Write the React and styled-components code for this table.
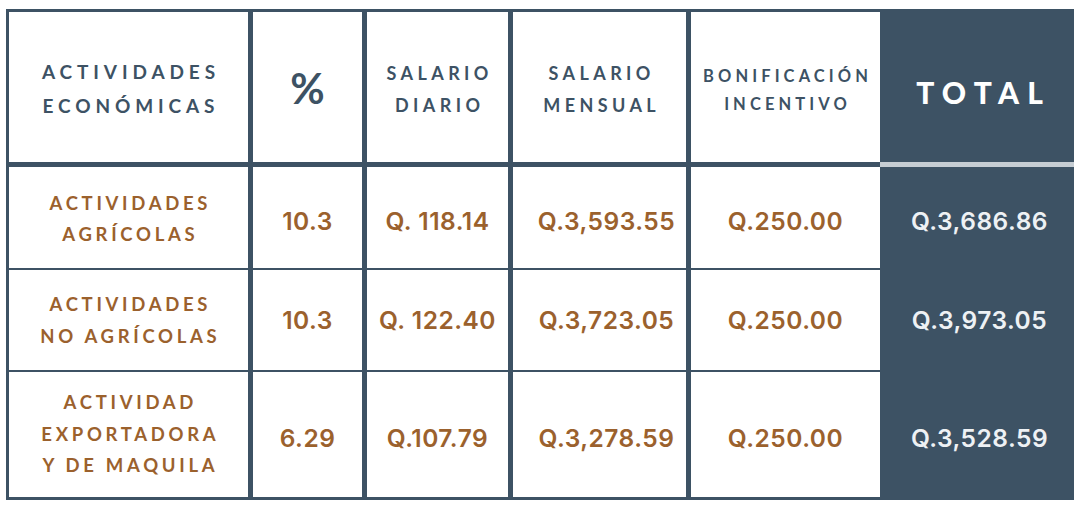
import React from "react";
import styled, { createGlobalStyle } from "styled-components";

const DARK = "#3d5264";
const BROWN = "#9b612d";
const COLS = "239px 109px 141px 173px 189px 1fr";

const Global = createGlobalStyle`
  html, body { margin: 0; padding: 0; background: #ffffff; }
  body { font-family: Lato, "Open Sans", sans-serif; }
`;

const Page = styled.div`
  padding: 9px 0 0 6px;
`;

const Table = styled.div`
  width: 1068px;
  box-sizing: border-box;
  background: ${DARK};
  padding: 3px 0 3px 3px;
  display: flex;
  flex-direction: column;
`;

const HeaderRow = styled.div`
  display: grid;
  grid-template-columns: ${COLS};
  column-gap: 5px;
  height: 150px;
`;

const HeadCell = styled.div`
  background: ${(p) => (p.$total ? "transparent" : "#ffffff")};
  color: ${(p) => (p.$total ? "#ffffff" : DARK)};
  display: flex;
  flex-direction: column;
  align-items: center;
  justify-content: center;
  box-sizing: border-box;
  padding-top: ${(p) => p.$shift || 0}px;
  font-family: Lato, sans-serif;
  font-weight: ${(p) => p.$weight || 700};
  font-size: ${(p) => p.$size}px;
  line-height: ${(p) => p.$lh}px;
  letter-spacing: ${(p) => p.$ls}px;
  text-transform: uppercase;
  text-align: center;
  white-space: nowrap;
`;

const Line = styled.span`
  display: block;
  margin-right: -${(p) => p.$ls}px;
`;

const Divider = styled.div`
  display: flex;
  height: 5px;
  justify-content: flex-end;
`;

const DividerLight = styled.div`
  width: 194px;
  background: #c6cdd3;
`;

const Body = styled.div`
  display: grid;
  grid-template-columns: ${COLS};
  grid-template-rows: 101px 100px 125px;
  column-gap: 5px;
  row-gap: 2px;
`;

const LabelCell = styled.div`
  background: #ffffff;
  color: ${BROWN};
  display: flex;
  flex-direction: column;
  align-items: center;
  justify-content: center;
  box-sizing: border-box;
  padding-top: ${(p) => p.$shift || 0}px;
  font-family: Lato, sans-serif;
  font-weight: 700;
  font-size: 18.5px;
  line-height: 31.5px;
  letter-spacing: 3.7px;
  text-align: center;
  white-space: nowrap;
`;

const ValueCell = styled.div`
  background: ${(p) => (p.$total ? "transparent" : "#ffffff")};
  color: ${(p) => (p.$total ? "#eef1f4" : BROWN)};
  display: flex;
  align-items: center;
  justify-content: center;
  box-sizing: border-box;
  padding-top: ${(p) => p.$shift || 0}px;
  padding-left: ${(p) => p.$indent || 0}px;
  font-family: Inter, "Open Sans", sans-serif;
  font-weight: 600;
  font-size: 24.5px;
  letter-spacing: 0.5px;
  white-space: nowrap;
`;

const headers = [
  { lines: ["Actividades", "Económicas"], size: 19, lh: 34, ls: 4.9, shift: 4 },
  { lines: ["%"], size: 42, lh: 44, ls: 0, shift: 2, weight: 700 },
  { lines: ["Salario", "Diario"], size: 18, lh: 31.5, ls: 4.4, shift: 5 },
  { lines: ["Salario", "Mensual"], size: 18, lh: 31.5, ls: 4.4, shift: 5 },
  { lines: ["Bonificación", "Incentivo"], size: 16.5, lh: 28, ls: 4.1, shift: 6 },
  { lines: ["Total"], size: 30, lh: 36, ls: 8.2, shift: 10, total: true, weight: 900 },
];

const rows = [
  {
    label: ["ACTIVIDADES", "AGRÍCOLAS"],
    labelShift: 3,
    shift: 7,
    values: ["10.3", "Q. 118.14", "Q.3,593.55", "Q.250.00"],
    total: "Q.3,686.86",
  },
  {
    label: ["ACTIVIDADES", "NO AGRÍCOLAS"],
    labelShift: 1,
    shift: 0,
    values: ["10.3", "Q. 122.40", "Q.3,723.05", "Q.250.00"],
    total: "Q.3,973.05",
  },
  {
    label: ["ACTIVIDAD", "EXPORTADORA", "Y DE MAQUILA"],
    labelShift: -2,
    shift: 6,
    values: ["6.29", "Q.107.79", "Q.3,278.59", "Q.250.00"],
    total: "Q.3,528.59",
  },
];

export default function App() {
  return (
    <Page>
      <Global />
      <Table>
        <HeaderRow>
          {headers.map((h, i) => (
            <HeadCell
              key={i}
              $size={h.size}
              $lh={h.lh}
              $ls={h.ls}
              $shift={h.shift}
              $total={h.total}
              $weight={h.weight}
            >
              {h.lines.map((l) => (
                <Line key={l} $ls={h.ls}>
                  {l}
                </Line>
              ))}
            </HeadCell>
          ))}
        </HeaderRow>
        <Divider>
          <DividerLight />
        </Divider>
        <Body>
          {rows.map((r, ri) => (
            <React.Fragment key={ri}>
              <LabelCell $shift={r.labelShift}>
                {r.label.map((l) => (
                  <Line key={l} $ls={3.7}>
                    {l}
                  </Line>
                ))}
              </LabelCell>
              {r.values.map((v, vi) => (
                <ValueCell key={vi} $shift={r.shift} $indent={vi === 2 ? 14 : 0}>
                  {v}
                </ValueCell>
              ))}
              <ValueCell $total $shift={r.shift}>
                {r.total}
              </ValueCell>
            </React.Fragment>
          ))}
        </Body>
      </Table>
    </Page>
  );
}
